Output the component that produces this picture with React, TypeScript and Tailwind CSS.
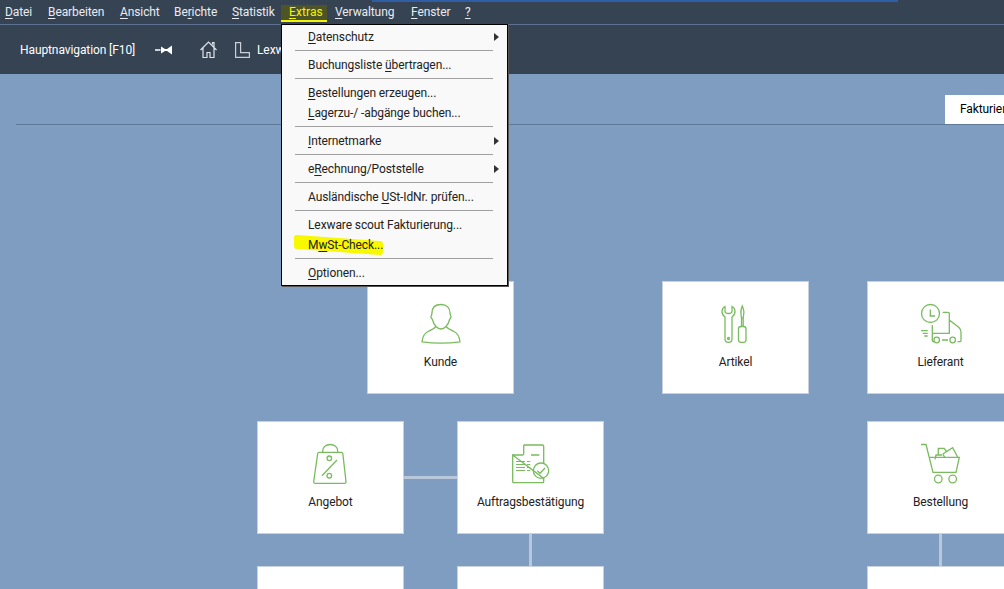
const font = "font-['Roboto','Noto_Sans',sans-serif]";

// underlined access key, like a windows menu
const Key = ({ before = "", k, after = "" }: { before?: string; k: string; after?: string }) => (
  <span>
    {before}
    <span className="underline underline-offset-2">{k}</span>
    {after}
  </span>
);

const menuBar = [
  { k: "D", after: "atei", w: "w-[27px]" },
  { k: "B", after: "earbeiten", w: "w-[56px]" },
  { k: "A", after: "nsicht", w: "w-[38px]" },
  { before: "Be", k: "r", after: "ichte", w: "w-[42px]" },
  { k: "S", after: "tatistik", w: "w-[41px]" },
];
const menuBarRight = [
  { k: "V", after: "erwaltung", w: "w-[60px]" },
  { k: "F", after: "enster", w: "w-[38px]" },
  { k: "?", after: "", w: "w-[6px]" },
];

type Item = { before?: string; k: string; after?: string; arrow?: boolean } | "sep";

const menuItems: Item[] = [
  { k: "D", after: "atenschutz", arrow: true },
  "sep",
  { before: "Buchungsliste ", k: "ü", after: "bertragen..." },
  "sep",
  { k: "B", after: "estellungen erzeugen..." },
  { k: "L", after: "agerzu-/ -abgänge buchen..." },
  "sep",
  { k: "I", after: "nternetmarke", arrow: true },
  "sep",
  { before: "e", k: "R", after: "echnung/Poststelle", arrow: true },
  "sep",
  { before: "Ausländische ", k: "U", after: "St-IdNr. prüfen..." },
  "sep",
  { before: "Lexware scout Fakturierung...", k: "" },
  { before: "M", k: "w", after: "St-Check..." },
  "sep",
  { k: "O", after: "ptionen..." },
];

const tileIcon = "w-[40px] h-[40px] fill-none stroke-[#7abb5f] stroke-[1.3] overflow-visible";

const PersonIcon = () => (
  <svg viewBox="0 0 40 40" className={tileIcon}>
    <path d="M20 .5C14 .5 11 4 11 9L10.500 11.500C9.500 12.500 10 14 11.200 15 12 18 13.500 21 15 22.500 13 25 10 26 7 27.500 3 29.500 1.500 33 1 37.800 13 39.500 27 39.500 39 37.800 38.500 33 37 29.500 33 27.500 30 26 27 25 25 22.500 26.500 21 28 18 28.800 15 30 14 30.500 12.500 29.500 11.500L29 9C29 4 26 .5 20 .5z" />
    <path d="M15 22.500C17 24.500 18.500 25 20 25 21.500 25 23 24.500 25 22.500" />
  </svg>
);

const ToolsIcon = () => (
  <svg viewBox="0 0 40 40" className={tileIcon}>
    <path d="M9 2.500C7 3.500 6 5 6 7.500 6 10 7.500 12 9 13V35C9 37 10.500 38.300 12.500 38.300 14.500 38.300 16 37 16 35V13C17.500 12 19 10 19 7.500 19 5 18 3.500 16 2.500V7C16 8.500 14.500 9.500 12.500 9.500 10.500 9.500 9 8.500 9 7z" />
    <circle cx="12.500" cy="34.500" r="1" />
    <path d="M26.300 2C25 5 24.500 8 25 10L25.500 14H27.200L27.700 10C28.200 8 27.500 5 26.300 2zM25.500 14V22.500M27.200 14V22.500" />
    <rect x="22.500" y="22.500" width="7.500" height="15.800" rx="2.500" />
  </svg>
);

const TruckIcon = () => (
  <svg viewBox="0 0 40 40" className={tileIcon}>
    <circle cx="9.500" cy="9.500" r="9" />
    <path d="M9.300 5.500V12H14M21.700 8.300H27C27.800 8.300 28.300 8.800 28.300 9.500V29.300H11.700M28.300 16L38 23.500C39.500 25 40 26.500 40 28V36.500C40 37.300 39.500 37.700 38.700 37.700H36.500M11.300 21V36.500C11.300 37.300 11.800 37.700 12.500 37.700H13M21 36H27M0 26.700H6.700M1.700 29.300H6.700M3.300 32H6.700" />
    <circle cx="15.700" cy="36" r="2.800" />
    <circle cx="31.700" cy="36" r="2.800" />
  </svg>
);

const BagIcon = () => (
  <svg viewBox="0 0 40 40" className={tileIcon}>
    <path d="M8 8.300H30.500C31.300 8.300 31.700 8.800 31.800 9.500L35 37.500C35.100 38.600 34.500 39.300 33.500 39.300H4.300C3.200 39.300 2.600 38.600 2.700 37.500L6.700 9.500C6.800 8.800 7.200 8.300 8 8.300z" />
    <path d="M11.700 8.300V7C11.700 3 15 .5 19.200 .5S26.700 3 26.700 7V8.300M26 16L11 31.700" />
    <circle cx="18.300" cy="14.300" r="2.300" />
    <circle cx="18.300" cy="31.700" r="2.300" />
  </svg>
);

const InvoiceIcon = () => (
  <svg viewBox="0 0 40 40" className={tileIcon}>
    <path d="M12.700 1H31.500C32.300 1 32.700 1.500 32.700 2.300V19M32.700 34.400V37.500C32.700 38.300 32.300 38.700 31.500 38.700H3C2.200 38.700 1.700 38.300 1.700 37.500V11zM12.700 1V9.800C12.700 10.600 12.300 11 11.500 11H1.700M20 11H28.300" />
    <path className="stroke-1" d="M5 17.500H14M5 20.500H14M5 23.500H14M5 26.500H14M16 17.500H19.300M16 20.500H19.300M16 23.500H19.300M16 26.500H19.300" />
    <circle cx="30" cy="26.700" r="7.700" />
    <path d="M26.300 26.700L29 29.300 34 24" />
  </svg>
);

const CartIcon = () => (
  <svg viewBox="0 0 40 40" className={tileIcon}>
    <path d="M0 .5H5L12 28.300H35L38.300 13.300H8.500" />
    <path d="M14 15.300L15 11H21M17.300 10.500L17.300 4.300H23.300L25.500 7.500 31.700 3.700 36.700 13.300M21.700 10.300L25.500 7.500M21.700 10.300L24 13.300" />
    <circle cx="17.300" cy="35" r="3.800" />
    <circle cx="31.700" cy="35" r="3.800" />
  </svg>
);

const tiles = [
  { label: "Kunde", pos: "left-[367px] top-[281px]", icon: <PersonIcon /> },
  { label: "Artikel", pos: "left-[662px] top-[281px]", icon: <ToolsIcon /> },
  { label: "Lieferant", pos: "left-[867px] top-[281px]", icon: <TruckIcon /> },
  { label: "Angebot", pos: "left-[257px] top-[421px]", icon: <BagIcon /> },
  { label: "Auftragsbestätigung", pos: "left-[457px] top-[421px]", icon: <InvoiceIcon /> },
  { label: "Bestellung", pos: "left-[867px] top-[421px]", icon: <CartIcon /> },
  { label: "", pos: "left-[257px] top-[566px]" },
  { label: "", pos: "left-[457px] top-[566px]" },
  { label: "", pos: "left-[867px] top-[566px]" },
];

export default function App() {
  return (
    <div className={`${font} relative w-[1004px] h-[589px] overflow-hidden bg-[#7f9dc1] text-[12px] tracking-[-0.1px]`}>
      {/* window title remnant */}
      <div className="absolute left-[372px] top-0 w-[526px] h-[2px] bg-[#2f5ea6]" />

      <div className="h-[25px] bg-[#364353] border-b border-[#5c7290] flex items-start text-[#e8ecf0] pl-[5px] leading-[24px]">
        <div className="flex gap-[16px]">
          {menuBar.map((m) => (
            <div key={m.k} className={`${m.w} whitespace-nowrap`}>
              <Key before={m.before} k={m.k} after={m.after} />
            </div>
          ))}
        </div>
        <div className="w-[46px] ml-[8px] mt-[5px] h-[17px] border-b-[2px] border-[#f2f20a] bg-[#4d5526] text-[#f4f400] pl-[8px] leading-[15px] tracking-[0.1px]">
          <Key k="E" after="x" />
          tras
        </div>
        <div className="flex gap-[16px] ml-[8px]">
          {menuBarRight.map((m) => (
            <div key={m.k} className={`${m.w} whitespace-nowrap`}>
              <Key k={m.k} after={m.after} />
            </div>
          ))}
        </div>
      </div>

      <div className="h-[49px] bg-[#364353] flex items-center text-white pl-[20px]">
        <span className="w-[114px] whitespace-nowrap">Hauptnavigation [F10]</span>
        <svg viewBox="0 0 17 10" className="w-[17px] h-[10px] ml-[21px] fill-white">
          <path d="M0 4.200h5.500v1.600H0zM6 1.500l4 2.500h2L17 .5v9L12 6h-2L6 8.500z" />
        </svg>
        <svg viewBox="0 0 17 17" className="w-[17px] h-[17px] ml-[28px] fill-none stroke-[#dfe4ea] stroke-[1.200]">
          <path d="M.5 9L8.500 1l8 8M3 7v9.500h4v-5h3v5h4V7M12.500 3.500V1.500H14V6" />
        </svg>
        <svg viewBox="0 0 15 16" className="w-[15px] h-[16px] ml-[18px] fill-none stroke-[#c9d0d8] stroke-[1.200]">
          <path d="M.6 .6h5v10h8.800v4.800H.6z" />
        </svg>
        <span className="ml-[7px]">Lexw</span>
      </div>

      {/* tab strip above the workflow diagram */}
      <div className="ml-[16px] mt-[21px] h-[30px] border-b border-[#5f7a99] pl-[929px] flex">
        <div className="w-[60px] h-[29px] shrink-0 bg-white text-black pl-[15px] leading-[29px] whitespace-nowrap overflow-hidden">
          Fakturierung
        </div>
      </div>

      {/* connectors */}
      <div className="absolute left-[403px] top-[476px] w-[54px] h-[3px] bg-[#b8c8da]" />
      <div className="absolute left-[529px] top-[533px] w-[3px] h-[33px] bg-[#b8c8da]" />
      <div className="absolute left-[939px] top-[533px] w-[3px] h-[33px] bg-[#b8c8da]" />

      {tiles.map((t) => (
        <div
          key={t.pos}
          className={`absolute ${t.pos} w-[147px] h-[113px] bg-white border border-[#c9d2dc] flex flex-col items-center pt-[22px] text-[#222]`}
        >
          {t.icon}
          <div className="mt-[10px] leading-[16px]">{t.label}</div>
        </div>
      ))}

      {/* open Extras menu */}
      <div className="absolute left-[281px] top-[24px] w-[227px] h-[262px] bg-[#f9f9f9] border border-black py-[2px] text-[#222] shadow-[1px_1px_0_#555]">
        {menuItems.map((item, i) =>
          item === "sep" ? (
            <div key={i} className="h-[8px] pt-[3px] pl-[13px] pr-[14px]">
              <div className="h-px bg-[#a0a0a0]" />
            </div>
          ) : (
            <div key={i} className="relative h-[20px] pl-[26px] leading-[21px] whitespace-nowrap">
              {item.k === "w" && (
                <div className="absolute left-[12px] top-[3px] w-[89px] h-[14px] bg-[#f8f800] rounded-[3px] skew-y-[4deg]" />
              )}
              <span className="relative">
                {item.k ? <Key before={item.before} k={item.k} after={item.after} /> : item.before}
              </span>
              {item.arrow && (
                <div className="absolute right-[8px] top-[6px] w-0 h-0 border-y-[4px] border-y-transparent border-l-[5px] border-l-[#333]" />
              )}
            </div>
          ),
        )}
      </div>
    </div>
  );
}
